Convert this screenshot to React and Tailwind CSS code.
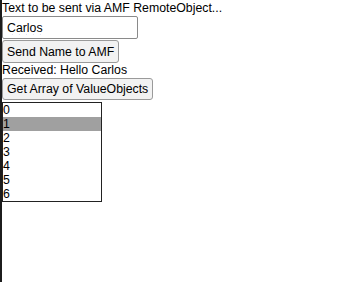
import React, { useState } from 'react';

const App = () => {
  const [name, setName] = useState('Carlos');
  const [selected, setSelected] = useState(1);
  const items = [0, 1, 2, 3, 4, 5, 6];

  return (
    <div className="min-h-screen h-[282px] border-l-2 border-[#1c1c1c] bg-white text-black text-[12.3px] font-['Liberation_Sans',Arial,sans-serif]">
      <div className="h-[16px] leading-[16px] whitespace-nowrap">Text to be sent via AMF RemoteObject...</div>
      <input
        value={name}
        onChange={e => setName(e.target.value)}
        className="block w-[136px] h-[23px] px-[4px] border border-[#8a8a8a] rounded-[2px] text-[12.3px] text-black underline decoration-wavy decoration-[#5b6fd8] decoration-1 underline-offset-2 outline-none"
      />
      <button className="block mt-px h-[23px] px-[4px] bg-[#f2f2f2] border border-[#9a9a9a] rounded-[3px] text-[12.3px] leading-[16px]">
        Send Name to AMF
      </button>
      <div className="h-[15px] leading-[15px] whitespace-nowrap">Received: Hello Carlos</div>
      <button className="block h-[22px] px-[4px] bg-[#f2f2f2] border border-[#9a9a9a] rounded-[3px] text-[12.3px] leading-[16px]">
        Get Array of ValueObjects
      </button>
      <div className="w-[100px] h-[100px] mt-[2px] border border-[#222] overflow-hidden">
        {items.map(i => (
          <div
            key={i}
            onClick={() => setSelected(i)}
            className={`h-[14px] leading-[14px] text-[12.3px] ${selected === i ? 'bg-[#a0a0a0]' : ''}`}
          >
            {i}
          </div>
        ))}
      </div>
    </div>
  );
};

export default App;
